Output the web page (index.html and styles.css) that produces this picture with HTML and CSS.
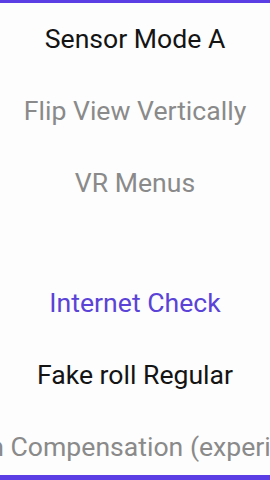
FILE: index.html
```html
<!DOCTYPE html>
<html>
<head>
<meta charset="utf-8">
<link rel="stylesheet" href="styles.css">
</head>
<body>
<div class="screen">
  <div class="bar"></div>
  <div class="list">
    <div class="item dark">Sensor Mode A</div>
    <div class="item gray">Flip View Vertically</div>
    <div class="item gray">VR Menus</div>
    <div class="spacer"></div>
    <div class="item accent">Internet Check</div>
    <div class="item dark">Fake roll Regular</div>
    <div class="item gray"><span class="long">Rotation Compensation (experimental)</span></div>
  </div>
  <div class="bar bottom"></div>
</div>
</body>
</html>
```
FILE: styles.css
```css
html, body {
  margin: 0;
  padding: 0;
  background: #fdfdfd;
}
.screen {
  width: 270px;
  height: 480px;
  display: flex;
  flex-direction: column;
  overflow: hidden;
  font-family: Roboto, "Noto Sans", sans-serif;
}
.bar {
  height: 3px;
  flex: none;
  background: #5b3fe4;
}
.bar.bottom {
  height: 5px;
}
.list {
  flex: 1;
  overflow: hidden;
  display: flex;
  flex-direction: column;
}
.item {
  box-sizing: border-box;
  height: 72px;
  padding-bottom: 2px;
  flex: none;
  display: flex;
  align-items: center;
  justify-content: center;
  white-space: nowrap;
  font-size: 26.6px;
}
.item .long {
  flex: none;
  margin-right: 4px;
}
.spacer {
  height: 48px;
  flex: none;
}
.dark { color: #141414; }
.gray { color: #8a8a8a; }
.accent { color: #5a43d6; }
```
